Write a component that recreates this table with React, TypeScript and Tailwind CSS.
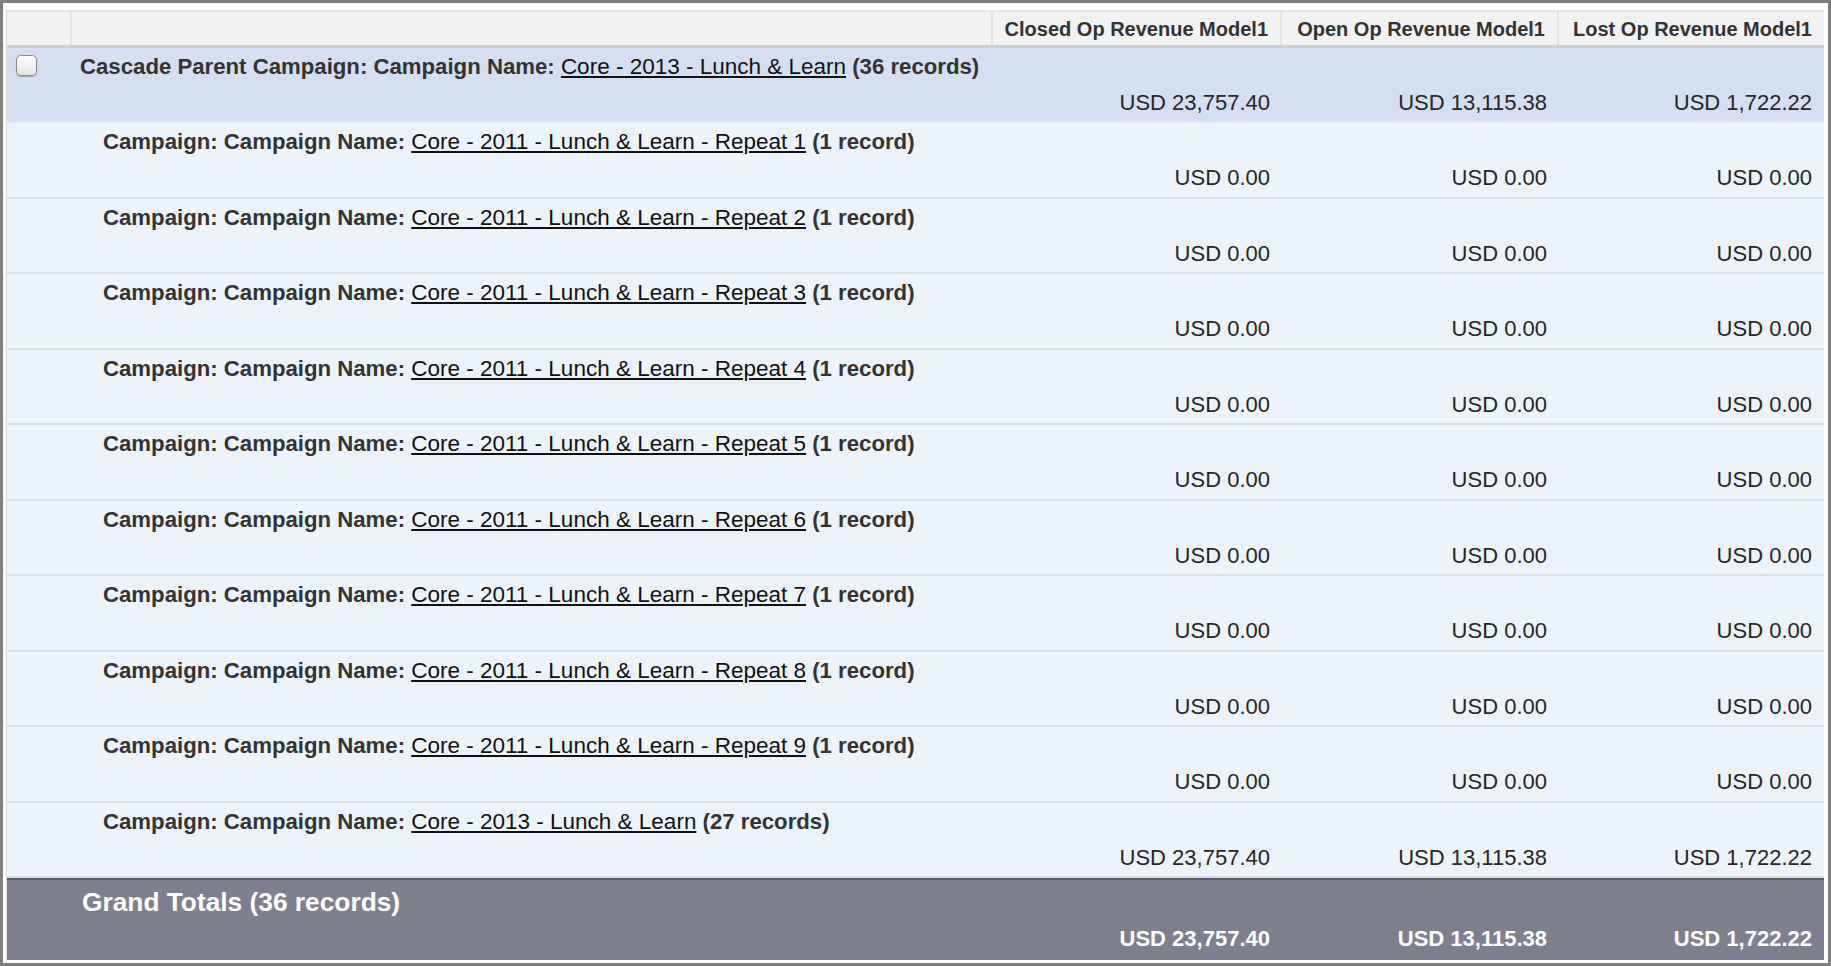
const font = { fontFamily: '"Liberation Sans", Arial, sans-serif' };

type Row = {
  prefix: string;
  link: string;
  count: string;
  values: string[];
};

const zero = ["USD 0.00", "USD 0.00", "USD 0.00"];
const totals = ["USD 23,757.40", "USD 13,115.38", "USD 1,722.22"];

const rows: Row[] = [
  ...[1, 2, 3, 4, 5, 6, 7, 8, 9].map((n) => ({
    prefix: "Campaign: Campaign Name: ",
    link: `Core - 2011 - Lunch & Learn - Repeat ${n}`,
    count: " (1 record)",
    values: zero,
  })),
  {
    prefix: "Campaign: Campaign Name: ",
    link: "Core - 2013 - Lunch & Learn",
    count: " (27 records)",
    values: totals,
  },
];

const cols = "grid grid-cols-[65px_921px_289px_277px_265px]";

const Values = ({ values, bold }: { values: string[]; bold?: boolean }) => (
  <>
    {values.map((v, i) => (
      <div
        key={i}
        className={`${i === 0 ? "col-start-3" : ""} text-right pr-3 text-[22px] leading-6 whitespace-nowrap ${
          bold ? "font-bold text-white" : "text-[#262626]"
        }`}
      >
        {v}
      </div>
    ))}
  </>
);

const App = () => {
  return (
    <div
      style={font}
      className="w-[1831px] h-[966px] border-[3px] border-[#7f7f7f] bg-white pt-[7px] pl-[3px] pr-[4px] pb-[3px] overflow-hidden"
    >
      <div className="border-l border-[#dcdcdc] flex flex-col">
        {/* header */}
        <div className={`${cols} h-[38px] bg-[#f2f2f2] border-t-2 border-[#e4e4e4] border-b-[3px] border-b-[#c9d1dd] text-[20px] font-bold text-[#333]`}>
          <div className="border-r-2 border-[#e2e2e2]" />
          <div className="border-r-2 border-[#e2e2e2]" />
          <div className="border-r-2 border-[#e2e2e2] flex items-center justify-end pr-3 whitespace-nowrap">
            Closed Op Revenue Model1
          </div>
          <div className="border-r-2 border-[#e2e2e2] flex items-center justify-end pr-3 whitespace-nowrap">
            Open Op Revenue Model1
          </div>
          <div className="flex items-center justify-end pr-3 whitespace-nowrap">
            Lost Op Revenue Model1
          </div>
        </div>

        {/* parent group */}
        <div className={`${cols} grid-rows-[24px_24px] content-start gap-y-3 pt-[7px] h-[75px] bg-[#d4dff1] border-b-2 border-[#dfe7f2]`}>
          <div className="row-span-2">
            <span className="block w-[21px] h-[21px] ml-[9px] rounded-[5px] border border-[#8a8a8a] bg-linear-to-b from-white to-[#e4e4e4] shadow-[0_1px_1px_rgba(0,0,0,0.25)]" />
          </div>
          <div className="col-span-4 pl-2 text-[22.2px] leading-6 font-bold text-[#333] whitespace-nowrap">
            Cascade Parent Campaign: Campaign Name:{" "}
            <a className="font-normal text-[22.5px] text-[#111] underline underline-offset-2">Core - 2013 - Lunch &amp; Learn</a>{" "}
            (36 records)
          </div>
          <Values values={totals} />
        </div>

        {rows.map((r, i) => (
          <div
            key={i}
            className={`${cols} grid-rows-[24px_24px] content-start gap-y-3 pt-[7px] h-[75.5px] bg-[#ecf3fb] border-b-2 border-[#d9dee5]`}
          >
            <div className="row-span-2" />
            <div className="col-span-4 pl-[31px] text-[22.2px] leading-6 font-bold text-[#333] whitespace-nowrap">
              {r.prefix}
              <a className="font-normal text-[22.5px] text-[#111] underline underline-offset-2">{r.link}</a>
              {r.count}
            </div>
            <Values values={r.values} />
          </div>
        ))}

        {/* grand totals */}
        <div className={`${cols} grid-rows-[30px_24px] content-start gap-y-[10px] pt-[7px] h-[82px] bg-[#7f808f] border-t-2 border-[#5a5c6a]`}>
          <div className="row-span-2" />
          <div className="col-span-4 pl-[10px] text-[26.3px] leading-[30px] font-bold text-white whitespace-nowrap">
            Grand Totals (36 records)
          </div>
          <Values values={totals} bold />
        </div>
      </div>
    </div>
  );
};

export default App;
